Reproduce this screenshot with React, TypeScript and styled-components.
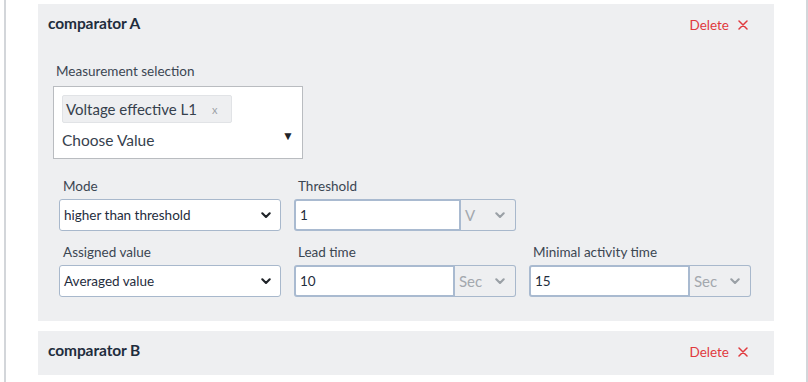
import React from "react";
import styled, { createGlobalStyle } from "styled-components";

const GlobalStyle = createGlobalStyle`
  html, body {
    margin: 0;
    padding: 0;
    background: #ffffff;
  }
  body {
    font-family: Lato, "Noto Sans", "Liberation Sans", sans-serif;
    color: #36414d;
  }
`;

const Page = styled.div`
  width: 804px;
  height: 382px;
  margin-left: 4px;
  box-sizing: border-box;
  border-left: 2px solid #d3d6da;
  border-right: 2px solid #d3d6da;
  padding: 4px 32px 0 32px;
  overflow: hidden;
  display: flex;
  flex-direction: column;
  gap: 10px;
`;

const Card = styled.div<{ $open?: boolean }>`
  background: #eeeff1;
  padding: ${({ $open }) => ($open ? "9px 26px 24px 10px" : "9px 26px 9px 10px")};
`;

const CardHeader = styled.div`
  display: flex;
  align-items: center;
  justify-content: space-between;
  height: 26px;
`;

const Title = styled.h3`
  margin: 0;
  font-size: 15.5px;
  font-weight: 700;
  color: #1f2d3d;
  letter-spacing: -0.1px;
  position: relative;
  top: -3px;
`;

const DeleteButton = styled.button`
  display: flex;
  align-items: center;
  gap: 9px;
  background: transparent;
  border: none;
  padding: 0;
  font-family: inherit;
  font-size: 13.5px;
  color: #e03a3e;
  cursor: pointer;
  position: relative;
  top: -1px;
`;

const Body = styled.div`
  padding-left: 5px;
`;

const Label = styled.div`
  font-size: 13.5px;
  line-height: 18px;
  color: #3b4652;
`;

const MeasureLabel = styled(Label)`
  margin: 23px 0 6px 3px;
`;

const MultiSelect = styled.div`
  width: 250px;
  height: 73px;
  box-sizing: border-box;
  background: #fff;
  border: 1px solid #b9bcc0;
  padding: 8px 8px 0 8px;
`;

const Tag = styled.div`
  width: 170px;
  height: 28px;
  box-sizing: border-box;
  background: #eeeff1;
  border: 1px solid #e1e3e6;
  border-radius: 2px;
  display: flex;
  align-items: center;
  padding-left: 3px;
  font-size: 15px;
  color: #36414d;
`;

const TagRemove = styled.span`
  margin-left: 15px;
  font-size: 11px;
  color: #9ea3a8;
`;

const ChooseRow = styled.div`
  display: flex;
  align-items: center;
  justify-content: space-between;
  margin-top: 8px;
  padding-right: 0;
  font-size: 15.5px;
  color: #36414d;
`;

const Caret = styled.span`
  font-size: 12px;
  color: #1f2328;
  position: relative;
  top: -5px;
`;

const FieldGrid = styled.div`
  display: grid;
  grid-template-columns: 222px 222px 222px;
  column-gap: 13px;
  row-gap: 12px;
  margin: 18px 0 0 6px;
`;

const Field = styled.div`
  display: flex;
  flex-direction: column;
  gap: 4px;
`;

const FieldLabel = styled(Label)`
  padding-left: 4px;
`;

const SelectBox = styled.div`
  height: 32px;
  box-sizing: border-box;
  background: #fff;
  border: 1px solid #a8b8cc;
  border-radius: 3px;
  display: flex;
  align-items: center;
  justify-content: space-between;
  padding: 0 9px 0 4px;
  font-size: 13.5px;
  color: #1f2d3d;
`;

const InputGroup = styled.div`
  height: 32px;
  display: flex;
  box-sizing: border-box;
`;

const TextInput = styled.div`
  flex: 1;
  box-sizing: border-box;
  background: #fff;
  border: 2px solid #a9bad0;
  border-radius: 3px 0 0 3px;
  display: flex;
  align-items: center;
  padding-left: 4px;
  font-size: 13.5px;
  color: #1f2d3d;
`;

const UnitSelect = styled.div<{ $width: number }>`
  width: ${({ $width }) => $width}px;
  box-sizing: border-box;
  border: 1px solid #a8b8cc;
  border-left: none;
  border-radius: 0 3px 3px 0;
  display: flex;
  align-items: center;
  justify-content: space-between;
  padding: 0 10px 0 4px;
  font-size: 15px;
  color: #a3a8ae;
`;

const Chevron: React.FC<{ color: string }> = ({ color }) => (
  <svg width="10" height="7" viewBox="0 0 10 7">
    <path d="M1.3 1.3 L5 5 L8.7 1.3" fill="none" stroke={color} strokeWidth="2.1" strokeLinecap="round" strokeLinejoin="round" />
  </svg>
);

const CloseIcon = () => (
  <svg width="10" height="10" viewBox="0 0 10 10">
    <path d="M1 1 L9 9 M9 1 L1 9" stroke="#e03a3e" strokeWidth="1.5" strokeLinecap="round" />
  </svg>
);

interface ComparatorProps {
  name: string;
  open?: boolean;
}

const Comparator: React.FC<ComparatorProps> = ({ name, open }) => (
  <Card $open={open}>
    <CardHeader>
      <Title>{name}</Title>
      <DeleteButton>
        Delete <CloseIcon />
      </DeleteButton>
    </CardHeader>
    {open && (
      <Body>
        <MeasureLabel>Measurement selection</MeasureLabel>
        <MultiSelect>
          <Tag>
            Voltage effective L1<TagRemove>x</TagRemove>
          </Tag>
          <ChooseRow>
            Choose Value<Caret>▼</Caret>
          </ChooseRow>
        </MultiSelect>
        <FieldGrid>
          <Field>
            <FieldLabel>Mode</FieldLabel>
            <SelectBox>
              higher than threshold <Chevron color="#1f2328" />
            </SelectBox>
          </Field>
          <Field>
            <FieldLabel>Threshold</FieldLabel>
            <InputGroup>
              <TextInput>1</TextInput>
              <UnitSelect $width={55}>
                V <Chevron color="#9aa0a6" />
              </UnitSelect>
            </InputGroup>
          </Field>
          <div />
          <Field>
            <FieldLabel>Assigned value</FieldLabel>
            <SelectBox>
              Averaged value <Chevron color="#1f2328" />
            </SelectBox>
          </Field>
          <Field>
            <FieldLabel>Lead time</FieldLabel>
            <InputGroup>
              <TextInput>10</TextInput>
              <UnitSelect $width={61}>
                Sec <Chevron color="#9aa0a6" />
              </UnitSelect>
            </InputGroup>
          </Field>
          <Field>
            <FieldLabel>Minimal activity time</FieldLabel>
            <InputGroup>
              <TextInput>15</TextInput>
              <UnitSelect $width={61}>
                Sec <Chevron color="#9aa0a6" />
              </UnitSelect>
            </InputGroup>
          </Field>
        </FieldGrid>
      </Body>
    )}
  </Card>
);

const App: React.FC = () => (
  <>
    <GlobalStyle />
    <Page>
      <Comparator name="comparator A" open />
      <Comparator name="comparator B" />
    </Page>
  </>
);

export default App;
